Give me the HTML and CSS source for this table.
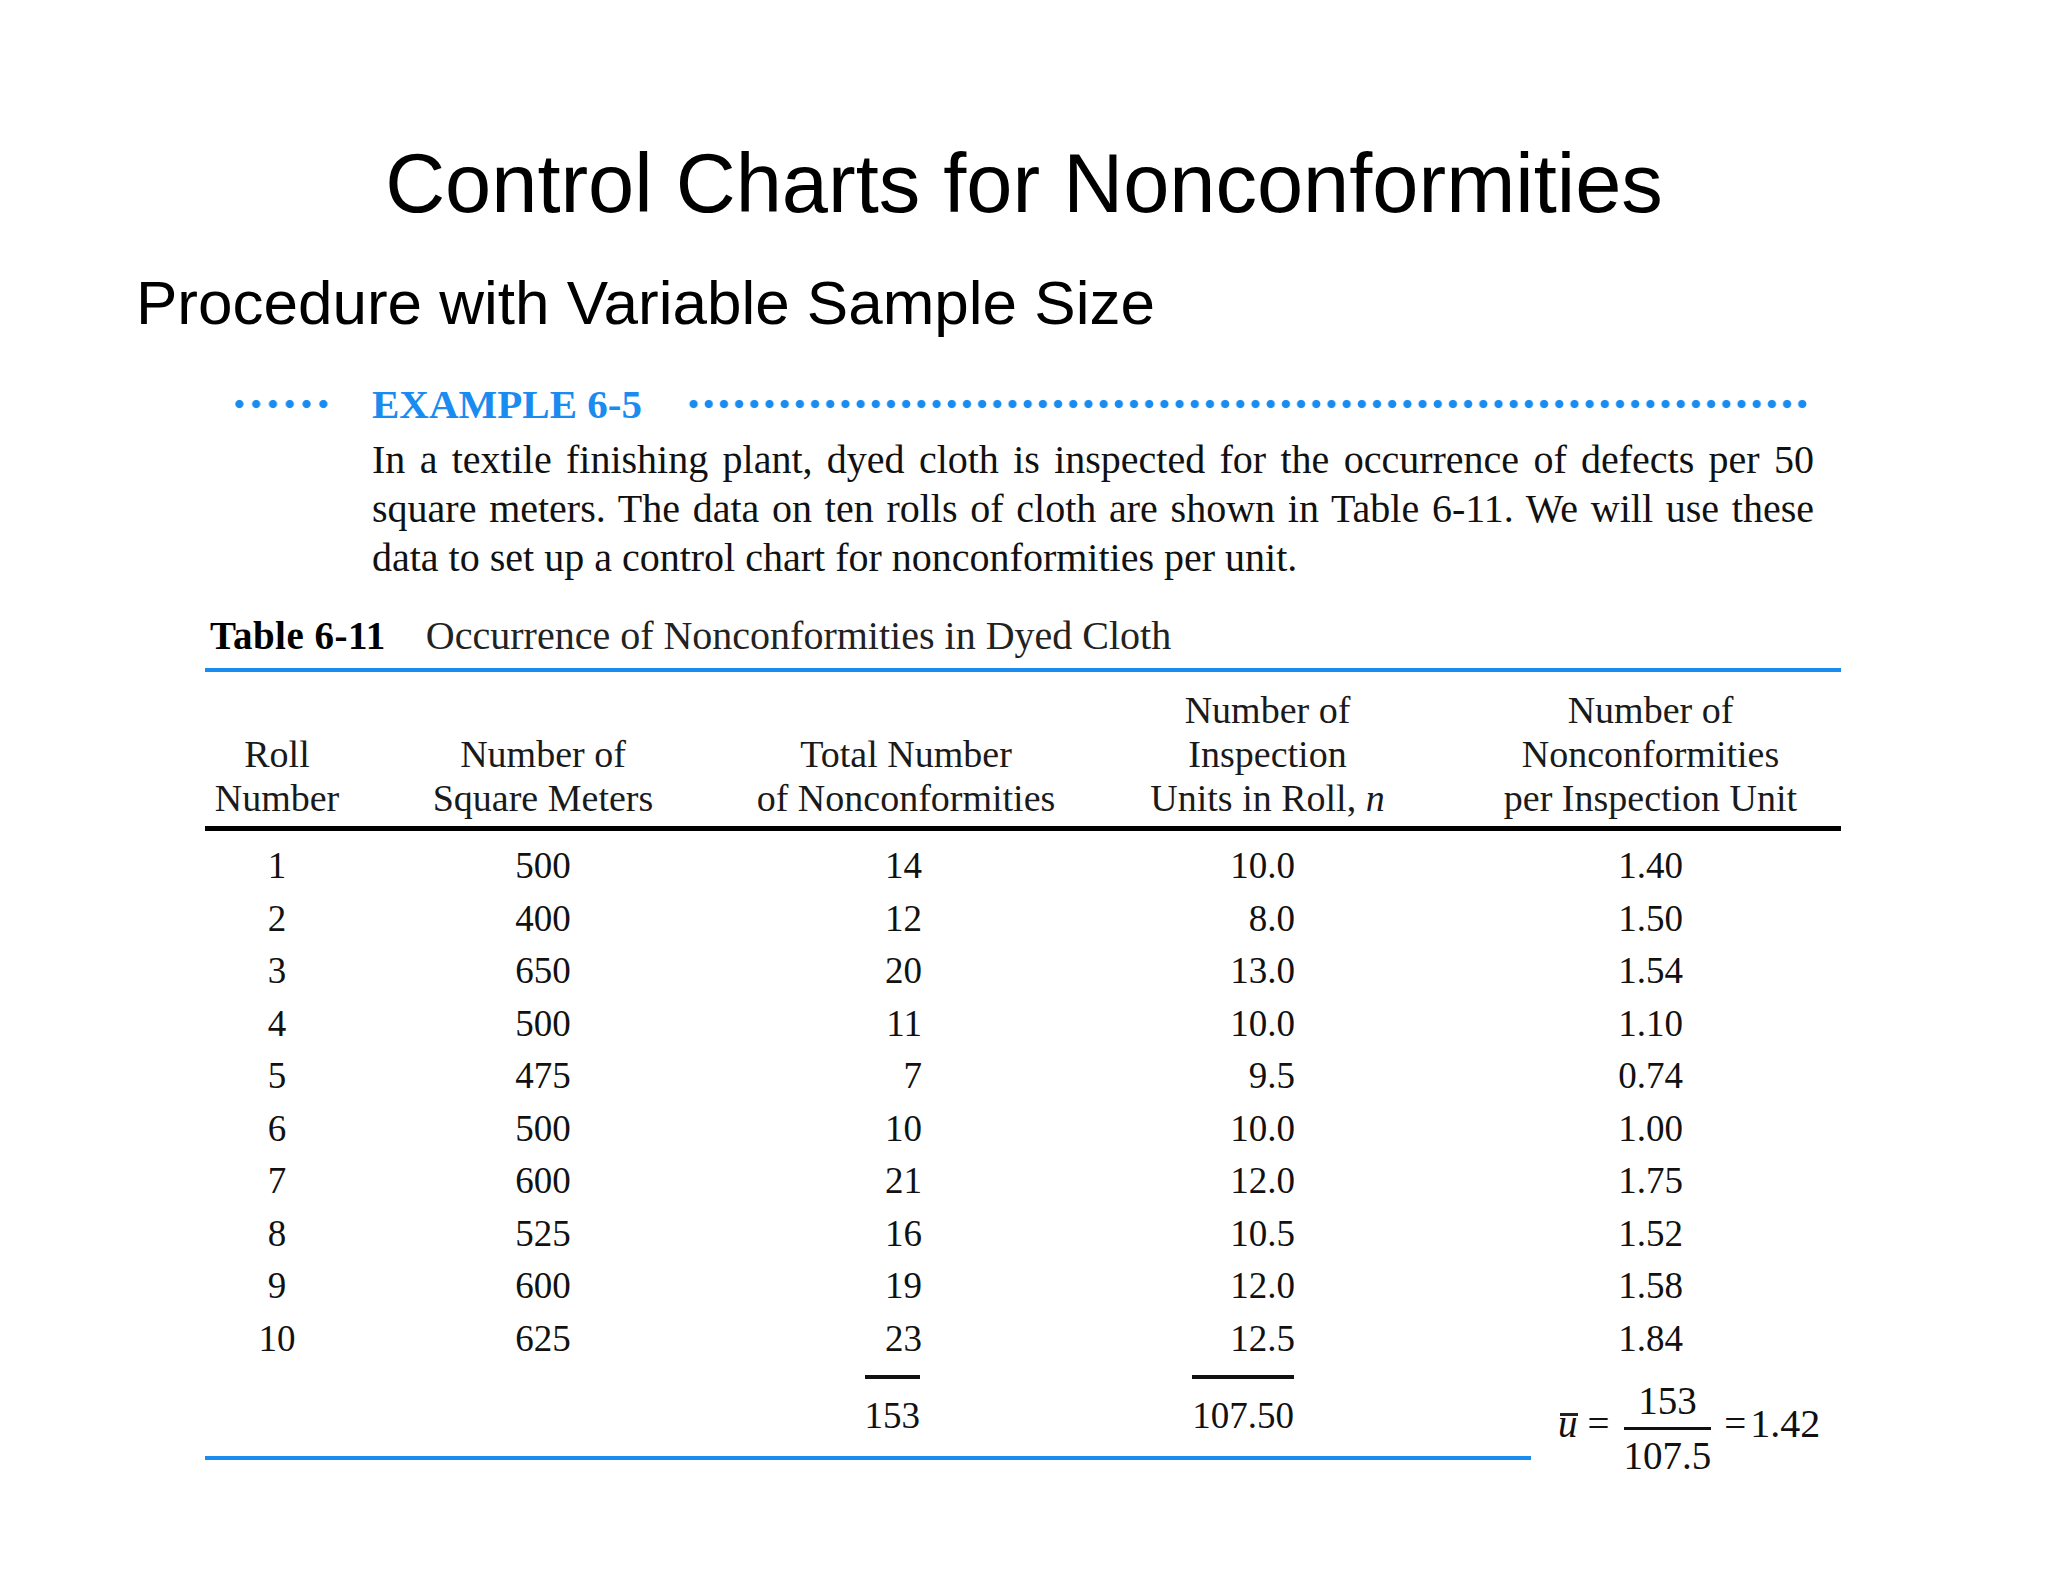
FILE: index.html
```html
<!DOCTYPE html>
<html lang="en">
<head>
<meta charset="utf-8">
<title>Control Charts for Nonconformities</title>
<link rel="stylesheet" href="styles.css">
</head>
<body>
<div class="slide">
  <h1 class="title">Control Charts for Nonconformities</h1>
  <h2 class="subtitle">Procedure with Variable Sample Size</h2>

  <section class="example">
    <div class="ex-head">
      <span class="dots dots-left"></span>
      <span class="ex-label">EXAMPLE 6-5</span>
      <span class="dots dots-right"></span>
    </div>
    <p class="ex-text">
      <span class="jl">In a textile finishing plant, dyed cloth is inspected for the occurrence of defects per 50</span>
      <span class="jl">square meters. The data on ten rolls of cloth are shown in Table 6-11. We will use these</span>
      <span class="ll">data to set up a control chart for nonconformities per unit.</span>
    </p>
  </section>

  <section class="tbl">
    <div class="caption"><span class="cap-num">Table 6-11</span><span class="cap-title">Occurrence of Nonconformities in Dyed Cloth</span></div>
    <div class="head">
      <div>Roll<br>Number</div>
      <div>Number of<br>Square Meters</div>
      <div>Total Number<br>of Nonconformities</div>
      <div>Number of<br>Inspection<br>Units in Roll, <i>n</i></div>
      <div>Number of<br>Nonconformities<br>per Inspection Unit</div>
    </div>
    <div class="body">
      <div>1</div><div>500</div><div>14</div><div>10.0</div><div>1.40</div>
      <div>2</div><div>400</div><div>12</div><div>8.0</div><div>1.50</div>
      <div>3</div><div>650</div><div>20</div><div>13.0</div><div>1.54</div>
      <div>4</div><div>500</div><div>11</div><div>10.0</div><div>1.10</div>
      <div>5</div><div>475</div><div>7</div><div>9.5</div><div>0.74</div>
      <div>6</div><div>500</div><div>10</div><div>10.0</div><div>1.00</div>
      <div>7</div><div>600</div><div>21</div><div>12.0</div><div>1.75</div>
      <div>8</div><div>525</div><div>16</div><div>10.5</div><div>1.52</div>
      <div>9</div><div>600</div><div>19</div><div>12.0</div><div>1.58</div>
      <div>10</div><div>625</div><div>23</div><div>12.5</div><div>1.84</div>
    </div>
    <div class="foot">
      <div class="totals">
        <div></div>
        <div></div>
        <div class="t3"><span class="sum">153</span></div>
        <div class="t4"><span class="sum">107.50</span></div>
        <div></div>
      </div>
      <div class="formula">
        <span class="fx ubar"><i>u</i></span>
        <span class="fx eq">=</span>
        <span class="frac">
          <span class="num">153</span>
          <span class="bar"></span>
          <span class="den">107.5</span>
        </span>
        <span class="fx eq eq2">=</span>
        <span class="fx res">1.42</span>
      </div>
    </div>
  </section>
</div>
</body>
</html>
```

FILE: styles.css
```css
html, body {
  margin: 0;
  padding: 0;
  background: #ffffff;
}

.slide {
  width: 2048px;
  height: 1582px;
  overflow: hidden;
  background: #ffffff;
  color: #000000;
  font-family: "Liberation Sans", Arial, sans-serif;
}

.title {
  margin: 0;
  padding-top: 129px;
  font-size: 83px;
  line-height: 110px;
  font-weight: normal;
  text-align: center;
}

.subtitle {
  margin: 29px 0 0 136px;
  font-size: 62px;
  line-height: 70px;
  font-weight: normal;
}

/* ---------- Example block ---------- */
.example {
  margin: 42px 0 0 231px;
  font-family: "Liberation Serif", "Times New Roman", serif;
}

.ex-head {
  display: flex;
  align-items: center;
  width: 1580px;
  height: 48px;
}

.dots {
  display: block;
  height: 10px;
  background-image: radial-gradient(circle at center, #1a8cf0 0, #1a8cf0 3.6px, rgba(26, 140, 240, 0) 4.6px);
  background-repeat: repeat-x;
}

.dots-left {
  width: 101px;
  margin-right: 40px;
  background-size: 16.8px 10px;
}

.dots-right {
  flex: 1;
  margin-left: 44px;
  background-size: 15.2px 10px;
}

.ex-label {
  font-size: 41px;
  line-height: 48px;
  font-weight: bold;
  color: #1a8cf0;
}

.ex-text {
  margin: 7px 0 0 141px;
  width: 1442px;
  font-size: 40px;
  line-height: 49px;
  color: #111111;
}

.ex-text span {
  display: block;
  white-space: nowrap;
}

.jl {
  text-align: justify;
  text-align-last: justify;
}

.ll {
  text-align: left;
}

/* ---------- Table ---------- */
.tbl {
  margin: 32px 0 0 205px;
  width: 1636px;
  font-family: "Liberation Serif", "Times New Roman", serif;
  color: #111111;
}

.caption {
  padding: 0 0 10px 5px;
  font-size: 40px;
  line-height: 44px;
  border-bottom: 4px solid #1a8cf0;
}

.cap-num {
  font-weight: bold;
  font-size: 39px;
  margin-right: 40px;
  letter-spacing: 0.5px;
  color: #000000;
}

.cap-title {
  color: #222222;
}

.head,
.body {
  display: grid;
  grid-template-columns: 144px 388px 338px 385px 381px;
}

.head {
  padding: 16px 0 6px;
  border-bottom: 5px solid #000000;
  font-size: 38px;
  line-height: 44px;
  text-align: center;
  align-items: end;
  color: #1a1a1a;
}

.body {
  padding-top: 9px;
  grid-auto-rows: 52.5px;
  font-size: 37px;
  line-height: 52.5px;
}

.body > div:nth-child(5n+1),
.body > div:nth-child(5n+2),
.body > div:nth-child(5n+5) {
  text-align: center;
}

.body > div:nth-child(5n+3) {
  text-align: right;
  padding-right: 153px;
}

.body > div:nth-child(5n+4) {
  text-align: right;
  padding-right: 165px;
}

/* ---------- Footer: totals + formula ---------- */
.foot {
  display: flex;
  align-items: flex-start;
  margin-top: 10px;
}

.totals {
  display: grid;
  grid-template-columns: 144px 388px 338px 385px 71px;
  width: 1326px;
  padding-bottom: 14px;
  border-bottom: 4px solid #1a8cf0;
  font-size: 37px;
  line-height: 52px;
}

.t3,
.t4 {
  display: flex;
  justify-content: flex-end;
}

.t3 {
  padding-right: 155px;
}

.t4 {
  padding-right: 166px;
}

.sum {
  display: block;
  border-top: 4px solid #111111;
  padding-top: 11px;
}

.formula {
  display: flex;
  align-items: center;
  margin: 5px 0 0 27px;
  font-family: "Liberation Serif", "Times New Roman", serif;
  font-size: 39px;
  line-height: 42px;
  color: #111111;
}

.fx {
  display: block;
  padding-bottom: 9px;
}

.ubar {
  position: relative;
  margin-right: 10px;
}

.ubar::before {
  content: "";
  position: absolute;
  left: 2px;
  right: 0;
  top: 10px;
  height: 3px;
  background: #222222;
}

.eq {
  margin-right: 9px;
}

.eq2 {
  margin-left: 8px;
  margin-right: 4px;
}

.res {
  font-size: 40px;
}

.frac {
  display: flex;
  flex-direction: column;
  align-items: center;
  padding: 0 5px;
}

.bar {
  display: block;
  align-self: stretch;
  height: 3px;
  margin: 5px 0;
  background: #111111;
}
```
